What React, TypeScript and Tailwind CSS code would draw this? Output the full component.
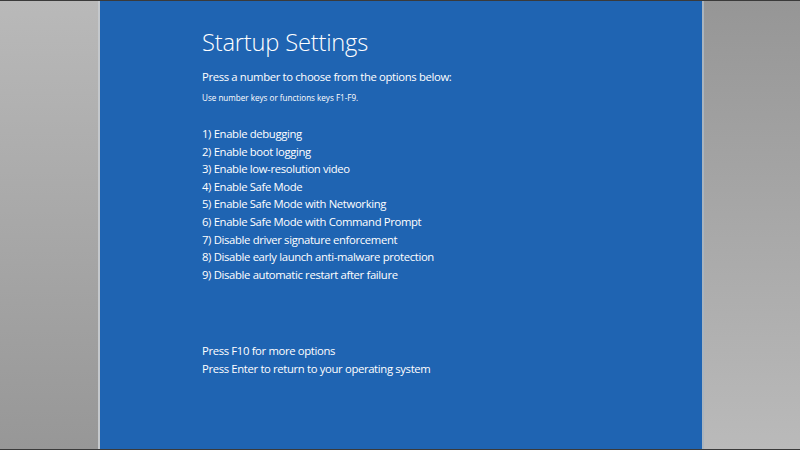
const OPTIONS = [
  "1) Enable debugging",
  "2) Enable boot logging",
  "3) Enable low-resolution video",
  "4) Enable Safe Mode",
  "5) Enable Safe Mode with Networking",
  "6) Enable Safe Mode with Command Prompt",
  "7) Disable driver signature enforcement",
  "8) Disable early launch anti-malware protection",
  "9) Disable automatic restart after failure",
];

export default function App() {
  return (
    <div
      className="flex h-[450px] w-[800px] border-y border-[#3a3a3a] text-white"
      style={{ fontFamily: '"Open Sans", "Noto Sans", sans-serif' }}
    >
      {/* left gray bezel */}
      <div className="w-[100px] border-r-2 border-[#c4c8cc] bg-gradient-to-b from-[#b9b9b9] to-[#979797]" />

      {/* blue screen */}
      <div className="flex flex-1 flex-col bg-[#1f64b2] pl-[102px] pt-[24px]">
        <h1 className="text-[23.7px] font-light leading-[34px] tracking-[-0.2px]">Startup Settings</h1>
        <p className="mt-[9px] text-[11.3px] leading-[18px] tracking-[-0.35px]">
          Press a number to choose from the options below:
        </p>
        <p className="mt-[6px] text-[8.1px] leading-[12px]">Use number keys or functions keys F1-F9.</p>

        <ul className="mt-[21px] text-[11.3px] leading-[17.6px] tracking-[-0.35px]">
          {OPTIONS.map(o => (
            <li key={o}>{o}</li>
          ))}
        </ul>

        <div className="mt-[59px] text-[11.3px] leading-[17.6px] tracking-[-0.35px]">
          <p>Press F10 for more options</p>
          <p>Press Enter to return to your operating system</p>
        </div>
      </div>

      {/* right gray bezel */}
      <div className="w-[98px] border-l-2 border-[#aab4be] bg-gradient-to-b from-[#969696] to-[#bababa]" />
    </div>
  );
}
